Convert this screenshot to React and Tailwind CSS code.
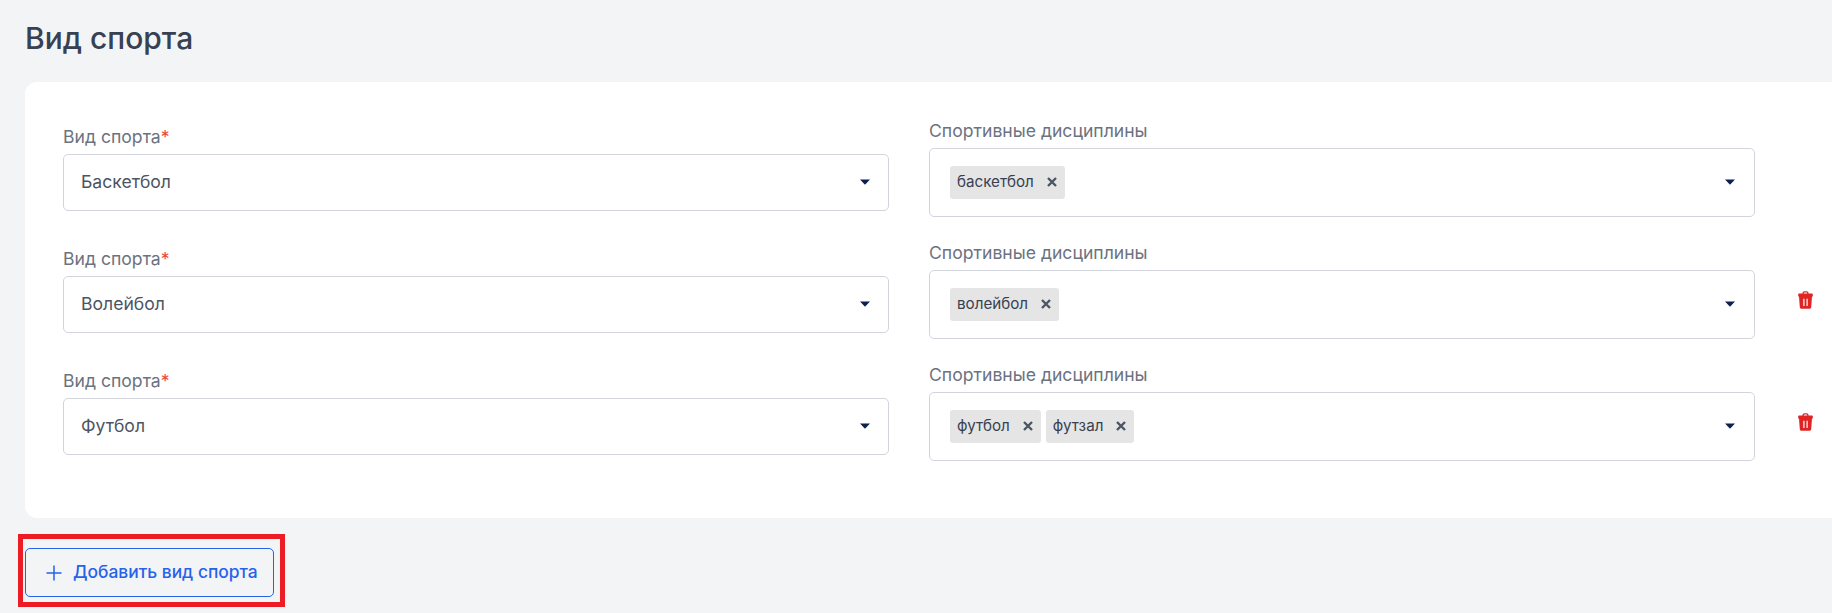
import React from 'react';

const rows = [
  { sport: 'Баскетбол', tags: ['баскетбол'], removable: false },
  { sport: 'Волейбол', tags: ['волейбол'], removable: true },
  { sport: 'Футбол', tags: ['футбол', 'футзал'], removable: true },
];

function Caret({ className }) {
  return (
    <svg width="10" height="6" viewBox="0 0 10 6" className={className}>
      <path d="M0 0.5h10L5 5.8z" fill="#0f1f4f" />
    </svg>
  );
}

function TrashIcon() {
  return (
    <svg width="15" height="18" viewBox="0 0 15 18" className="block">
      <path
        fillRule="evenodd"
        d="M4.500 2.500V2C4.500 1 5.300.2 6.300.2h2.400c1 0 1.800.8 1.800 1.800v.5h3.300c.5 0 1 .4 1 1V5.500H.2V3.500c0-.6.5-1 1-1h3.300zm1.300 0h3.400V2c0-.3-.2-.5-.5-.5H6.300c-.3 0-.5.2-.5.5v.5zM1 5.500h13l-.8 10.800c-.1.9-.8 1.500-1.600 1.500H3.400c-.8 0-1.500-.6-1.600-1.500L1 5.500zm4.300 2.200v7.300h1.200V7.700H5.300zm3.200 0v7.300h1.200V7.700H8.500z"
        fill="#e02424"
      />
    </svg>
  );
}

function Tag({ label }) {
  return (
    <span className="flex h-[33px] items-center rounded-[3px] bg-[#e5e5e5] pl-[7px] pr-[8px] text-[15.2px] text-[#374151]">
      {label}
      <svg width="10" height="10" viewBox="0 0 10 10" className="ml-[13px]">
        <path d="M1 1l8 8M9 1l-8 8" stroke="#4b5563" strokeWidth="2.400" />
      </svg>
    </span>
  );
}

function Row({ sport, tags, removable }) {
  return (
    <div className="flex h-[122px] items-center">
      <div className="w-[826px]">
        <div className="mb-[6px] text-[17.6px] leading-[22px] text-[#6b7280]">
          Вид спорта<span className="text-[#ef4444]">*</span>
        </div>
        <div className="flex h-[57px] items-center justify-between rounded-[5px] border border-[#d1d5db] bg-white pl-[17px] pr-[18px] text-[17.6px] text-[#4b5563]">
          {sport}
          <Caret />
        </div>
      </div>
      <div className="ml-[40px] w-[826px]">
        <div className="mb-[6px] text-[17.6px] leading-[22px] text-[#6b7280]">Спортивные дисциплины</div>
        <div className="flex h-[69px] items-center justify-between rounded-[5px] border border-[#d1d5db] bg-white pl-[20px] pr-[19px]">
          <div className="flex gap-[5px]">
            {tags.map((t) => (
              <Tag key={t} label={t} />
            ))}
          </div>
          <Caret />
        </div>
      </div>
      <div className="ml-[43px] mt-[19px] w-[16px]">{removable && <TrashIcon />}</div>
    </div>
  );
}

export default function App() {
  return (
    <div className="relative h-[613px] overflow-hidden bg-[#f3f4f6] pl-[25px] font-['Inter',sans-serif]">
      <h1 className="pt-[18px] text-[30px] font-medium leading-[40px] text-[#374151]">Вид спорта</h1>

      <div className="mt-[24px] h-[436px] w-[1830px] rounded-[12px] bg-white pl-[38px] pt-[25px]">
        {rows.map((r) => (
          <Row key={r.sport} {...r} />
        ))}
      </div>

      <button className="mt-[30px] flex h-[49px] w-[249px] items-center gap-[11px] rounded-[5px] border border-[#2563eb] pl-[20px] text-[17.4px] font-medium text-[#2563eb]">
        <svg width="16" height="16" viewBox="0 0 16 16">
          <path d="M8 0.500v15M0.500 8h15" stroke="#2563eb" strokeWidth="1.500" />
        </svg>
        Добавить вид спорта
      </button>

      {/* red annotation frame around the button */}
      <div className="absolute left-[18px] top-[534px] h-[73px] w-[267px] border-[5px] border-[#ed1c24]" />
    </div>
  );
}
